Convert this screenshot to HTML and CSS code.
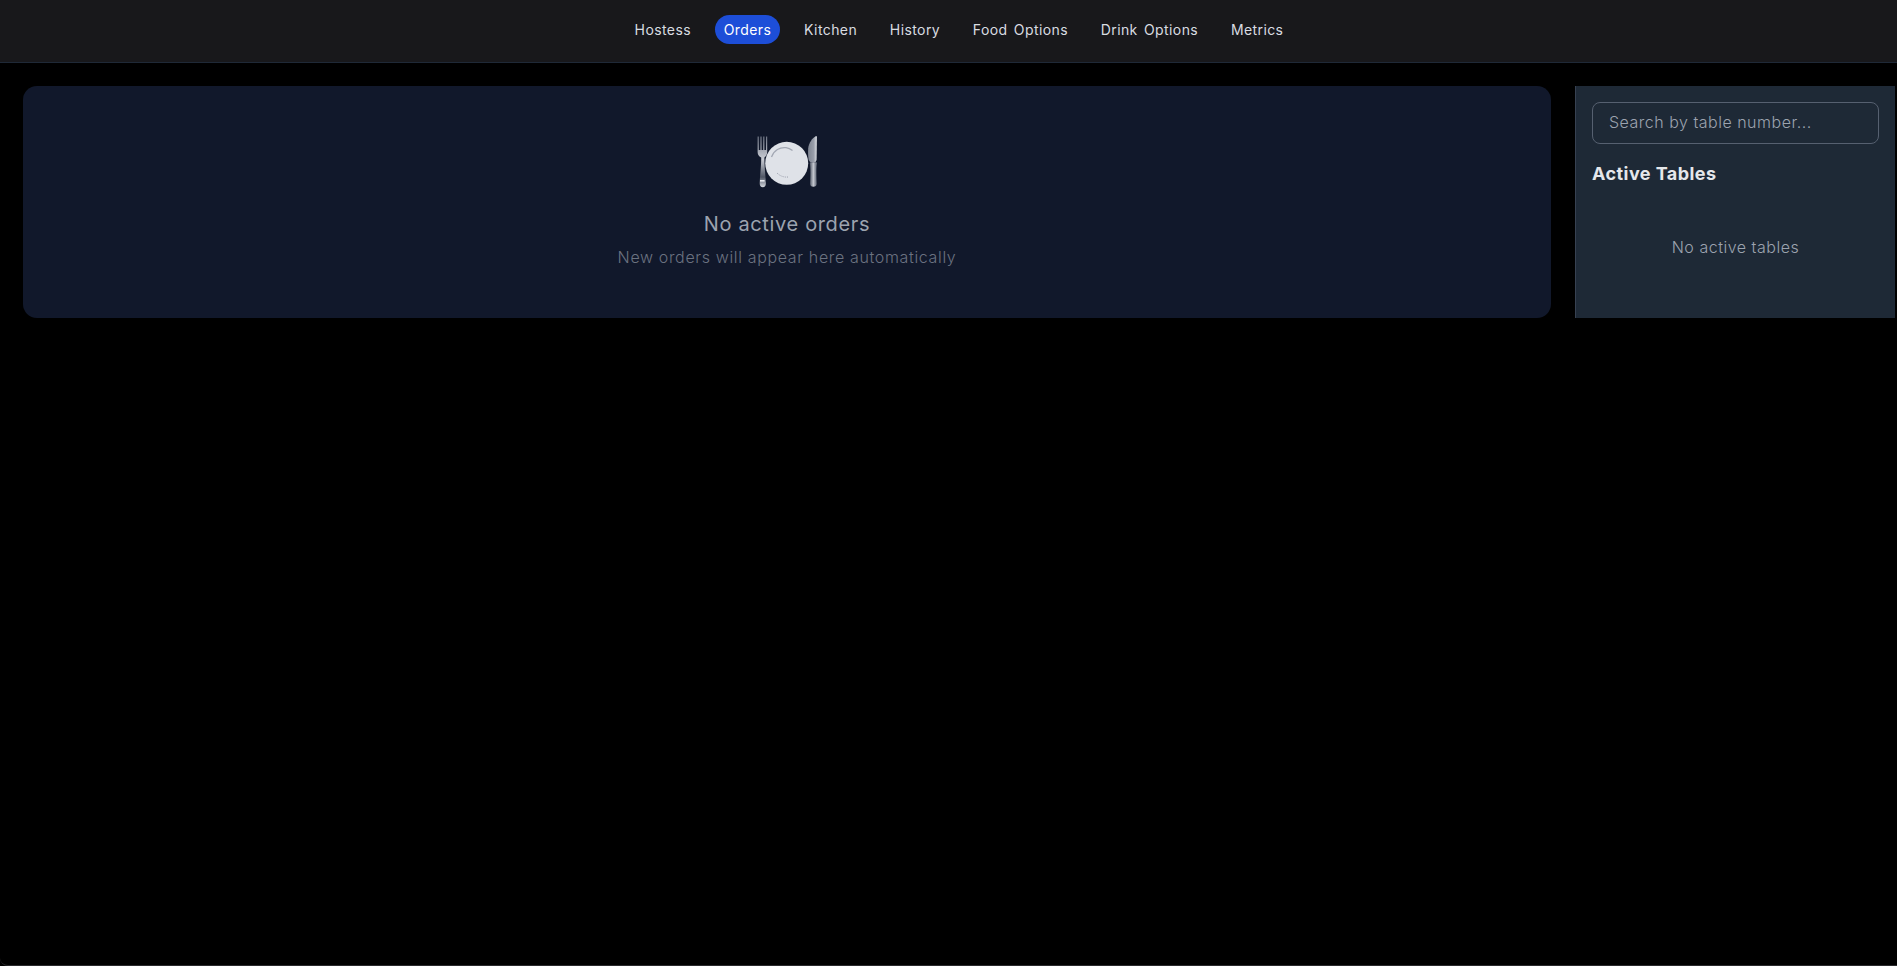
FILE: index.html
```html
<!DOCTYPE html>
<html lang="en">
<head>
    <meta charset="UTF-8">
    <meta name="viewport" content="width=device-width, initial-scale=1.0">
    <title>Orders</title>
    <link rel="stylesheet" href="styles.css">
</head>
<body>
    <div class="app">
        <header class="topbar">
            <nav class="nav">
                <a class="nav-link" href="#">Hostess</a>
                <a class="nav-link active" href="#">Orders</a>
                <a class="nav-link" href="#">Kitchen</a>
                <a class="nav-link" href="#">History</a>
                <a class="nav-link" href="#">Food Options</a>
                <a class="nav-link" href="#">Drink Options</a>
                <a class="nav-link" href="#">Metrics</a>
            </nav>
        </header>
        <div class="content">
            <main class="orders-card">
                <svg class="plate-icon" viewBox="0 0 60 60" aria-hidden="true">
                    <defs>
                        <linearGradient id="forkShade" x1="0" y1="0" x2="0" y2="1">
                            <stop offset="0" stop-color="#6f7584"/>
                            <stop offset="0.45" stop-color="#c9ccd4"/>
                            <stop offset="0.8" stop-color="#4f5665"/>
                            <stop offset="1" stop-color="#d5d8de"/>
                        </linearGradient>
                        <linearGradient id="knifeShade" x1="0" y1="0" x2="1" y2="0">
                            <stop offset="0" stop-color="#7f8592"/>
                            <stop offset="0.65" stop-color="#9a9fab"/>
                            <stop offset="1" stop-color="#dfe1e6"/>
                        </linearGradient>
                        <linearGradient id="handleShade" x1="0" y1="0" x2="1" y2="0">
                            <stop offset="0" stop-color="#525968"/>
                            <stop offset="0.5" stop-color="#c4c7cf"/>
                            <stop offset="1" stop-color="#596070"/>
                        </linearGradient>
                    </defs>
                    <!-- fork -->
                    <path fill="url(#forkShade)" d="M.6 2.500h1.200v13.500h1.600V2.500h1.200v13.500h1.600V2.500h1.200v13.500h1.600V2.500h1.200V18c0 3-1.700 4.600-2.800 5.600-.2 6 1.300 20 1.500 25.400.1 2.800-1.100 4.200-3.100 4.200s-3.200-1.400-3.100-4.200c.2-5.400 1.700-19.400 1.500-25.400C2.300 22.600.6 21 .6 18z"/>
                    <rect x="3" y="46" width="4.600" height="1.600" fill="#e8eaee"/>
                    <!-- plate -->
                    <circle cx="29.700" cy="29.300" r="21.500" fill="#dfe2e8"/>
                    <path d="M14.500 23C17 16 23 13 29 13.700c2.500.3 4.500 1.300 6.500 2.900" fill="none" stroke="#a2a7b3" stroke-width="1.300"/>
                    <path d="M20 39c3 3 7 4.500 11 4" fill="none" stroke="#969ba8" stroke-width="1" stroke-dasharray="1 1.200"/>
                    <!-- knife -->
                    <path fill="url(#knifeShade)" d="M59 2c.7 0 .9.600.9 1.500l-.3 22c-.1 1.300-.6 2-1.500 2.800h-4.400c-1-.7-2-1.600-2.200-3-.4-3.500-.6-7.300-.3-11C51.700 9 55.400 4 59 2z"/>
                    <path fill="url(#handleShade)" d="M53.200 28.300h6.400c.3 0 .4.500.3 1.500-.8 5-.4 14-.2 19.700.1 2.300-1.100 3.300-3.300 3.300s-3.400-1-3.300-3.300c.2-5.700.6-14.700-.2-19.700-.1-1 0-1.500.3-1.500z"/>
                </svg>
                <h2 class="empty-title">No active orders</h2>
                <p class="empty-text">New orders will appear here automatically</p>
            </main>
            <aside class="sidebar">
                <input class="search" type="text" placeholder="Search by table number...">
                <h3 class="sidebar-title">Active Tables</h3>
                <p class="no-tables">No active tables</p>
            </aside>
        </div>
    </div>
</body>
</html>
```

FILE: styles.css
```css
* {
    box-sizing: border-box;
}
body {
    margin: 0;
    background-color: #000;
    font-family: Inter, "Open Sans", sans-serif;
    color: #e5e7eb;
}
.app {
    min-height: 100vh;
    border-bottom: 1px solid #2a2a2d;
    border-bottom-left-radius: 8px;
}
.topbar {
    height: 63px;
    background-color: #18181b;
    border-bottom: 1px solid #1f2937;
    display: flex;
    align-items: center;
    justify-content: center;
}
.nav {
    display: flex;
    gap: 16px;
    margin-left: 21px;
    padding-bottom: 3px;
}
.nav-link {
    padding: 5px 8.400px;
    border-radius: 999px;
    font-size: 14px;
    line-height: 19px;
    letter-spacing: 0.4px;
    word-spacing: 2px;
    color: #d9dce1;
    text-decoration: none;
}
.nav-link.active {
    background-color: #1d4ed8;
    color: #fff;
}
.content {
    display: flex;
    gap: 24px;
    padding: 23px 2px 0 23px;
}
.orders-card {
    flex: 1;
    padding: 48px 0;
    height: 232px;
    background-color: #11182b;
    border-radius: 14px;
    display: flex;
    flex-direction: column;
    align-items: center;
}
.plate-icon {
    width: 60px;
    height: 60px;
    margin-bottom: 16px;
}
.empty-title {
    margin: 0 0 7px;
    font-size: 20px;
    line-height: 28px;
    font-weight: 400;
    letter-spacing: 0.65px;
    color: #9ca3af;
}
.empty-text {
    margin: 0;
    font-size: 16px;
    line-height: 24px;
    font-weight: 300;
    letter-spacing: 0.65px;
    color: #6b7280;
}
.sidebar {
    width: 320px;
    padding: 16px;
    background-color: #1e2936;
    border-left: 1px solid #374151;
}
.search {
    display: block;
    width: 100%;
    height: 42px;
    padding: 0 16px 2px;
    background-color: transparent;
    border: 1px solid #566070;
    border-radius: 8px;
    font-family: inherit;
    font-size: 16px;
    font-weight: 300;
    letter-spacing: 0.5px;
    color: #e5e7eb;
    outline: none;
}
.search::placeholder {
    color: #9ca3af;
    opacity: 1;
}
.sidebar-title {
    margin: 16px 0 0;
    font-size: 18px;
    line-height: 28px;
    font-weight: 700;
    letter-spacing: 0.45px;
    color: #e5e7eb;
}
.no-tables {
    margin: 47px 0 0;
    text-align: center;
    font-size: 16px;
    line-height: 24px;
    font-weight: 300;
    letter-spacing: 0.52px;
    color: #9ca3af;
}
```
